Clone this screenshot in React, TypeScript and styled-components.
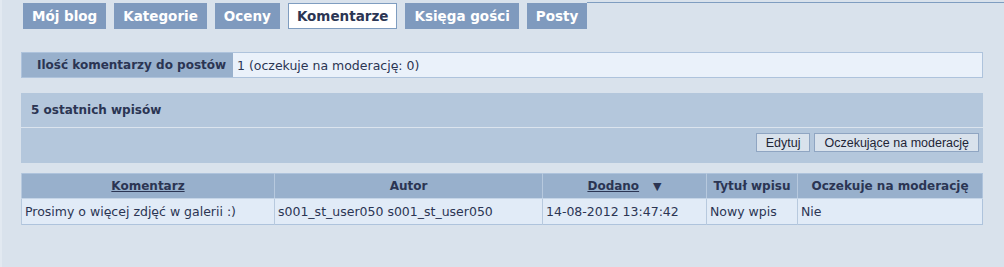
import React from 'react'
import styled, { createGlobalStyle } from 'styled-components'

const GlobalStyle = createGlobalStyle`
  body {
    margin: 0;
    background: #d9e2ec;
    font-family: "DejaVu Sans", Verdana, sans-serif;
    font-size: 12.5px;
    color: #2b3553;
  }
`

const Page = styled.div`
  border-left: 2px solid #e2e9f1;
  height: 267px;
  box-sizing: border-box;
`

const TabBar = styled.div`
  display: flex;
  align-items: flex-start;
  height: 29px;
  padding-left: 21px;
`

const TabList = styled.div`
  display: flex;
  gap: 8px;
`

const Tab = styled.div<{ $active?: boolean }>`
  margin-top: 3px;
  height: 26px;
  box-sizing: border-box;
  padding: 0 8px;
  display: flex;
  align-items: center;
  font-size: 13.5px;
  font-weight: bold;
  color: ${(p) => (p.$active ? '#2b3553' : '#ffffff')};
  background: ${(p) => (p.$active ? '#ffffff' : '#7f9abe')};
  border: 1px solid ${(p) => (p.$active ? '#7f9dc0' : '#7f9abe')};
`

const TabLine = styled.div`
  flex: 1;
  margin-top: 2px;
  border-top: 1px solid #7f9dc0;
`

const Content = styled.div`
  margin: 23px 21px 0 19px;
`

const InfoRow = styled.div`
  display: flex;
  height: 26px;
  box-sizing: border-box;
  border: 1px solid #aec3dc;
`

const InfoLabel = styled.div`
  width: 211px;
  box-sizing: border-box;
  padding-left: 15px;
  display: flex;
  align-items: center;
  background: #98b0cc;
  font-size: 12px;
  font-weight: bold;
`

const InfoValue = styled.div`
  flex: 1;
  padding-left: 4px;
  display: flex;
  align-items: center;
  background: #eaf1fa;
`

const Panel = styled.div`
  margin-top: 15px;
  background: #b4c7dc;
`

const PanelHeader = styled.div`
  height: 34px;
  padding-left: 10px;
  display: flex;
  align-items: center;
  font-size: 12px;
  font-weight: bold;
  border-bottom: 1px solid #dbe4ee;
`

const Toolbar = styled.div`
  height: 35px;
  box-sizing: border-box;
  padding: 5px 4px 0;
  display: flex;
  justify-content: flex-end;
  align-items: flex-start;
  gap: 4px;
`

const Button = styled.button`
  height: 19px;
  padding: 0 9px;
  font-family: "Liberation Sans", Arial, sans-serif;
  font-size: 12.5px;
  color: #1e2536;
  background: #d9e2ec;
  border: 1px solid #8fa5c2;
  border-radius: 0;
`

const Table = styled.table`
  margin-top: 10px;
  width: 100%;
  border-collapse: collapse;
  table-layout: fixed;
  border: 1px solid #aec3dc;
`

const Th = styled.th`
  height: 24px;
  padding: 0 3px;
  background: #98b0cc;
  font-size: 12px;
  font-weight: bold;
  text-align: center;
  border-left: 1px solid #b7c9de;
  border-bottom: 1px solid #c5d5e7;
`

const Td = styled.td`
  height: 25px;
  padding: 0 3px;
  background: #e1ebf7;
  border-left: 1px solid #b7c9de;
  white-space: nowrap;
`

const SortLink = styled.span`
  text-decoration: underline;
`

const Arrow = styled.span`
  margin-left: 14px;
  font-size: 11px;
`

const tabs = ['Mój blog', 'Kategorie', 'Oceny', 'Komentarze', 'Księga gości', 'Posty']

export default function App() {
  return (
    <>
      <GlobalStyle />
      <Page>
        <TabBar>
          <TabList>
            {tabs.map((t) => (
              <Tab key={t} $active={t === 'Komentarze'}>
                {t}
              </Tab>
            ))}
          </TabList>
          <TabLine />
        </TabBar>
        <Content>
          <InfoRow>
            <InfoLabel>Ilość komentarzy do postów</InfoLabel>
            <InfoValue>1 (oczekuje na moderację: 0)</InfoValue>
          </InfoRow>
          <Panel>
            <PanelHeader>5 ostatnich wpisów</PanelHeader>
            <Toolbar>
              <Button>Edytuj</Button>
              <Button>Oczekujące na moderację</Button>
            </Toolbar>
          </Panel>
          <Table>
            <colgroup>
              <col style={{ width: 253 }} />
              <col style={{ width: 268 }} />
              <col style={{ width: 164 }} />
              <col style={{ width: 91 }} />
              <col />
            </colgroup>
            <thead>
              <tr>
                <Th>
                  <SortLink>Komentarz</SortLink>
                </Th>
                <Th>Autor</Th>
                <Th>
                  <SortLink>Dodano</SortLink>
                  <Arrow>▼</Arrow>
                </Th>
                <Th>Tytuł wpisu</Th>
                <Th>Oczekuje na moderację</Th>
              </tr>
            </thead>
            <tbody>
              <tr>
                <Td>Prosimy o więcej zdjęć w galerii :)</Td>
                <Td>s001_st_user050 s001_st_user050</Td>
                <Td>14-08-2012 13:47:42</Td>
                <Td>Nowy wpis</Td>
                <Td>Nie</Td>
              </tr>
            </tbody>
          </Table>
        </Content>
      </Page>
    </>
  )
}
